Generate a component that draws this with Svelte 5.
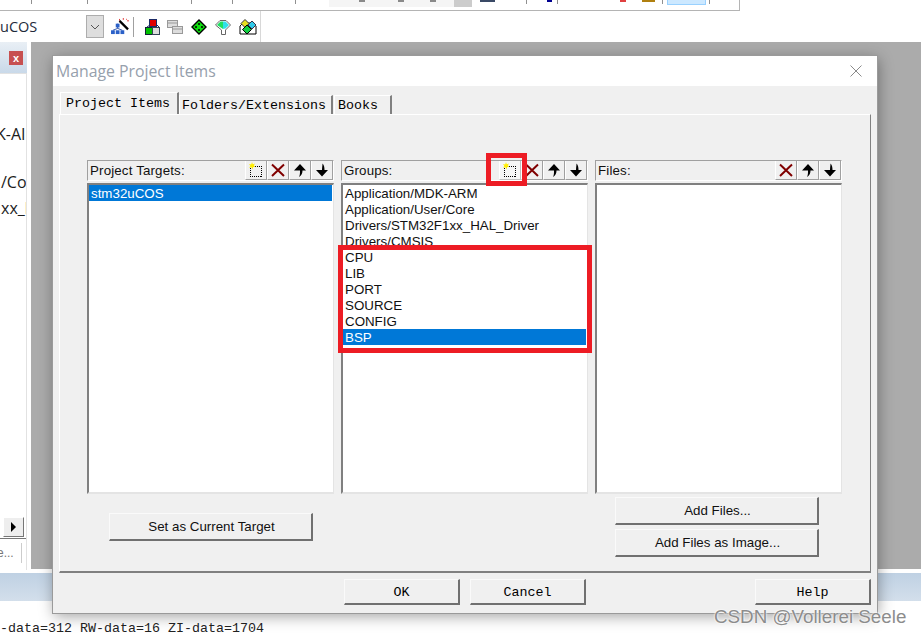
<script>
    const panels = [
        {
            title: 'Project Targets:',
            hasNew: true,
            items: ['stm32uCOS'],
            selected: 0
        },
        {
            title: 'Groups:',
            hasNew: true,
            focusNew: true,
            items: [
                'Application/MDK-ARM',
                'Application/User/Core',
                'Drivers/STM32F1xx_HAL_Driver',
                'Drivers/CMSIS',
                'CPU',
                'LIB',
                'PORT',
                'SOURCE',
                'CONFIG',
                'BSP'
            ],
            selected: 9
        },
        {
            title: 'Files:',
            hasNew: false,
            items: [],
            selected: -1
        }
    ]

    const tabs = ['Project Items', 'Folders/Extensions', 'Books']
    const topTicks = [31, 87, 191, 232, 295, 526, 557, 662, 709]
    // cut-off bits of the toolbar above, only their lower edge is visible
    const topBits = [
        { x: 359, w: 6, h: 2, c: '#8a8a8a' },
        { x: 398, w: 6, h: 2, c: '#8a8a8a' },
        { x: 430, w: 6, h: 2, c: '#8a8a8a' },
        { x: 480, w: 15, h: 2, c: '#3a4a66' },
        { x: 547, w: 5, h: 2, c: '#000090' },
        { x: 620, w: 6, h: 2, c: '#e04040' },
        { x: 642, w: 13, h: 2, c: '#b08010' }
    ]
</script>

{#snippet newIcon()}
    <svg width="16" height="16" viewBox="0 0 16 16">
        <rect x="2.500" y="4.500" width="11" height="10" fill="none" stroke="#000" stroke-dasharray="1 1" shape-rendering="crispEdges" />
        <path d="M4 0l.8 2.200L7 1.500 5.800 3.500 7.500 4.800l-2.300.2L4.500 7.500 3.500 5.300 1 5.800l1.400-1.800L1 2l2.200.5z" fill="#ffee00" />
    </svg>
{/snippet}

{#snippet deleteIcon()}
    <svg width="16" height="16" viewBox="0 0 16 16">
        <path d="M2 2.500L14 14M14 2.500L2 14" stroke="#800000" stroke-width="2" fill="none" />
    </svg>
{/snippet}

{#snippet upIcon()}
    <svg width="16" height="16" viewBox="0 0 16 16">
        <path d="M8 2l6 6.500h-3.500c0 3-1 5-3.500 6.500 1-2 1-4 1-6.500H2z" fill="#000" />
    </svg>
{/snippet}

{#snippet downIcon()}
    <svg width="16" height="16" viewBox="0 0 16 16">
        <path d="M8 14.500l6-6.500h-3.500c0-3-.5-5-2-6.500 0 2-.5 4-.5 6.500H2z" fill="#000" />
    </svg>
{/snippet}

<div class="screen">
    <div class="top-strip">
        <span class="strip-light"></span>
        <span class="strip-grey"></span>
        <span class="strip-sel"></span>
        {#each topTicks as x}
            <span class="tick" style="left: {x}px"></span>
        {/each}
        {#each topBits as bit}
            <span class="tick" style="left: {bit.x}px; width: {bit.w}px; height: {bit.h}px; background: {bit.c}"></span>
        {/each}
    </div>

    <div class="toolbar-row">
        <div class="toolbar">
            <span class="target-name">uCOS</span>
            <span class="combo-arrow">
                <svg width="10" height="6" viewBox="0 0 10 6"><path d="M1 1l4 4 4-4" fill="none" stroke="#555" /></svg>
            </span>
            <svg class="tool wand" width="18" height="17" viewBox="0 0 19 18">
                <path d="M9 1v2M13 0v2M17 3h2M16 1l1 1" stroke="#d33" fill="none" />
                <path d="M9 3l9 9" stroke="#000" stroke-width="2.4" />
                <path d="M7 6v5M2 13l5-2 5 2" stroke="#2a50a8" fill="none" />
                <rect x="5" y="6" width="4" height="4" fill="#2a60c8" />
                <rect x="0" y="13" width="4" height="4" fill="#2a60c8" />
                <rect x="5" y="13" width="4" height="4" fill="#2a60c8" />
                <rect x="10" y="13" width="4" height="4" fill="#2a60c8" />
            </svg>
            <span class="tool-sep"></span>
            <svg class="tool" width="16" height="18" viewBox="0 0 16 18">
                <rect x="4.500" y="1.500" width="7" height="7" fill="#e00000" stroke="#1c2a66" />
                <rect x="0.500" y="9.500" width="7" height="7" fill="#00c000" stroke="#123" />
                <rect x="7.500" y="9.500" width="7" height="7" fill="#ddd" stroke="#345" />
                <path d="M2 9l3-2M14 9l-2-2" stroke="#1c2a66" />
            </svg>
            <svg class="tool windows" width="16" height="18" viewBox="0 0 16 18">
                <rect x="0.500" y="2.500" width="10" height="7" fill="#ddd" stroke="#999" />
                <path d="M1 5h9" stroke="#999" />
                <rect x="5.500" y="8.500" width="10" height="7" fill="#ddd" stroke="#999" />
                <path d="M6 11h9" stroke="#999" />
            </svg>
            <svg class="tool" width="16" height="18" viewBox="0 0 16 18">
                <path d="M8 2l7 7-7 7-7-7z" fill="#10e010" stroke="#000" stroke-width="1.400" />
                <path d="M8 5v2M7 6h2M5 8v2M4 9h2M11 8v2M10 9h2M8 11v2M7 12h2" stroke="#000" />
            </svg>
            <svg class="tool" width="16" height="18" viewBox="0 0 16 18">
                <path d="M.5 7L5 2.500h6L15.500 7l-5 5v4.500h-4V12z" fill="#fff" stroke="#666" />
                <path d="M2 7l3.500-3.500H8v7.500z" fill="#20e060" />
                <path d="M8 3.500h2.500L14 7l-3.500 3.500L8 11z" fill="#30e0e8" />
            </svg>
            <svg class="tool" width="18" height="18" viewBox="0 0 18 18">
                <path d="M1 8l3-3h10l3 3v8H1z" fill="#fff" stroke="#000" />
                <path d="M6 1.500l4 4-4 4-4-4z" fill="#e8e020" stroke="#334" />
                <path d="M13 3l4 4-4 4-4-4z" fill="#30c8e8" stroke="#334" />
                <path d="M8 7l4.500 4.500L8 16l-4.500-4.500z" fill="#10d040" stroke="#000" />
            </svg>
        </div>
    </div>

    <div class="workspace">
        <aside class="side">
            <div class="side-head"><span class="side-close">x</span></div>
            <div class="side-body">
                <div class="side-text">
                    <span class="k">K-AI</span>
                    <span class="co">/Co</span>
                    <span class="xx">xx_l</span>
                </div>
                <div class="scroll-row">
                    <span class="scroll-btn"></span>
                </div>
                <div class="side-foot"><span>e...</span></div>
            </div>
        </aside>
        <div class="grey-area"></div>
    </div>

    <div class="status-band"></div>
    <div class="build-output">-data=312 RW-data=16 ZI-data=1704</div>

    <div class="dialog">
        <div class="title-bar">
            <span class="title">Manage Project Items</span>
            <svg class="close" width="12" height="12" viewBox="0 0 12 12">
                <path d="M0.500 0.500l11 11M11.500 0.500l-11 11" stroke="#8a8a8a" fill="none" />
            </svg>
        </div>
        <div class="dialog-body">
            <div class="tab-strip">
                {#each tabs as tab, i}
                    <div class="tab" class:active={i === 0}>{tab}</div>
                {/each}
            </div>
            <div class="tab-page">
                <div class="columns">
                    {#each panels as panel}
                        <section class="panel">
                            <div class="panel-head">
                                <span class="panel-title">{panel.title}</span>
                                <div class="panel-tools">
                                    {#if panel.hasNew}
                                        <span class="tool-btn" class:focus={panel.focusNew}>{@render newIcon()}</span>
                                    {/if}
                                    <span class="tool-btn">{@render deleteIcon()}</span>
                                    <span class="tool-btn">{@render upIcon()}</span>
                                    <span class="tool-btn">{@render downIcon()}</span>
                                </div>
                            </div>
                            <div class="list">
                                {#each panel.items as item, i}
                                    <div class="list-item" class:selected={i === panel.selected}>{item}</div>
                                {/each}
                            </div>
                        </section>
                    {/each}
                </div>
                <div class="actions">
                    <div class="action-left">
                        <button class="btn wide">Set as Current Target</button>
                    </div>
                    <div class="action-right">
                        <button class="btn wide">Add Files...</button>
                        <button class="btn wide">Add Files as Image...</button>
                    </div>
                </div>
            </div>
            <div class="footer">
                <button class="btn mono">OK</button>
                <button class="btn mono">Cancel</button>
                <button class="btn mono help">Help</button>
            </div>
        </div>

        <!-- red annotations drawn on top of the screenshot -->
        <span class="mark mark-new"></span>
        <span class="mark mark-list"></span>
    </div>

    <div class="watermark">CSDN @Vollerei Seele</div>
</div>

<style>
    :global(body) {
        margin: 0;
        overflow: hidden;
        background: #fff;
    }

    .screen {
        position: relative;
        display: flex;
        flex-direction: column;
        width: 921px;
        height: 633px;
        overflow: hidden;
        background: #fff;
        font-family: "Liberation Sans", Arial, sans-serif;
    }

    .top-strip {
        position: relative;
        flex: none;
        width: 739px;
        height: 10px;
        border-bottom: 1px solid #b4b4b4;
        border-right: 1px solid #b4b4b4;
    }

    .tick {
        position: absolute;
        top: 0;
        width: 1px;
        height: 4px;
        background: #909090;
    }

    .strip-light {
        position: absolute;
        left: 329px;
        top: 0;
        width: 125px;
        height: 7px;
        background: #f5f5f5;
    }

    .strip-grey {
        position: absolute;
        left: 454px;
        top: 0;
        width: 18px;
        height: 7px;
        background: #cccccc;
    }

    .strip-sel {
        position: absolute;
        left: 667px;
        top: 0;
        width: 39px;
        height: 5px;
        box-sizing: border-box;
        background: #cce8ff;
        border: 1px solid #99d1ff;
        border-top: none;
    }

    .toolbar-row {
        flex: none;
        height: 31px;
    }

    .toolbar {
        display: flex;
        align-items: center;
        box-sizing: border-box;
        width: 261px;
        height: 31px;
        border-right: 1px solid #d8d8d8;
    }

    .target-name {
        width: 86px;
        font-family: "Open Sans", sans-serif;
        font-size: 14.5px;
        color: #1e2a3a;
        margin-top: -1px;
    }

    .combo-arrow {
        display: flex;
        align-items: center;
        justify-content: center;
        box-sizing: border-box;
        width: 18px;
        height: 23px;
        background: #dedede;
        border: 1px solid #adadad;
    }

    .tool {
        flex: none;
        margin-left: 8px;
    }

    .wand {
        margin-left: 7px;
    }

    .windows {
        margin-left: 6px;
    }

    .tool-sep {
        width: 1px;
        height: 20px;
        margin-left: 4px;
        margin-right: 3px;
        background: #a0a0a0;
    }

    .workspace {
        display: flex;
        flex: none;
        height: 528px;
    }

    .side {
        display: flex;
        flex-direction: column;
        box-sizing: border-box;
        width: 27px;
        flex: none;
    }

    .side-head {
        flex: none;
        display: flex;
        align-items: center;
        justify-content: flex-end;
        height: 31px;
        padding-right: 4px;
        box-sizing: border-box;
        background: linear-gradient(#e9eff5, #c9d9e9);
    }

    .side-close {
        display: flex;
        align-items: center;
        justify-content: center;
        width: 14px;
        height: 14px;
        background: #c75050;
        color: #fff;
        font-size: 11px;
        font-weight: bold;
        line-height: 14px;
    }

    .side-body {
        flex: 1;
        display: flex;
        flex-direction: column;
        min-height: 0;
        border-top: 1px solid #e2e2e2;
        border-right: 1px solid #e2e2e2;
    }

    .side-text {
        flex: none;
        display: flex;
        flex-direction: column;
        height: 443px;
        overflow: hidden;
        font-family: "Open Sans", sans-serif;
        font-size: 16px;
        color: #1c1c1c;
        line-height: 20px;
        white-space: nowrap;
    }

    .k {
        margin-top: 50px;
        margin-left: -4px;
    }

    .co {
        margin-top: 28px;
        margin-left: 1px;
    }

    .xx {
        margin-top: 6px;
        margin-left: 1px;
    }

    .scroll-row {
        flex: none;
        height: 22px;
        display: flex;
        justify-content: flex-end;
        padding: 0 2px 1px 0;
        border-bottom: 1px solid #777;
        box-sizing: border-box;
    }

    .scroll-btn {
        position: relative;
        box-sizing: border-box;
        width: 21px;
        height: 20px;
        background: #eee;
        border: 1px solid #fff;
        border-right-color: #777;
        border-bottom-color: #777;
    }

    .scroll-btn::after {
        content: '';
        position: absolute;
        left: 7px;
        top: 4px;
        border-left: 5px solid #000;
        border-top: 5px solid transparent;
        border-bottom: 5px solid transparent;
    }

    .side-foot {
        flex: 1;
        display: flex;
        align-items: center;
        font-size: 12px;
        color: #777;
    }

    .side-foot span {
        box-sizing: border-box;
        width: 22px;
        height: 20px;
        line-height: 20px;
        margin-top: -4px;
        border-right: 1px solid #ccc;
        text-indent: -3px;
        overflow: hidden;
    }

    .grey-area {
        flex: 1;
        margin-left: 4px;
        height: 527px;
        background: #ababab;
    }

    .status-band {
        flex: none;
        height: 28px;
        margin-top: 3px;
        background: linear-gradient(#bfd1e3, #d3dfeb);
    }

    .build-output {
        padding-top: 23px;
        font-family: "Liberation Mono", monospace;
        font-size: 13.33px;
        line-height: 10px;
        color: #222;
    }

    .dialog {
        position: absolute;
        left: 53px;
        top: 56px;
        display: flex;
        flex-direction: column;
        box-sizing: border-box;
        width: 824px;
        height: 557px;
        background: #f0f0f0;
        box-shadow: 0 0 0 1px #9a9a9a, 1px 3px 14px rgba(0, 0, 0, 0.38);
    }

    .title-bar {
        flex: none;
        display: flex;
        align-items: center;
        justify-content: space-between;
        height: 30px;
        padding: 0 15px 0 3px;
        background: #fff;
    }

    .title {
        margin-top: -1px;
        font-family: "Open Sans", sans-serif;
        font-size: 15.800px;
        color: #96a0ac;
    }

    .dialog-body {
        flex: 1;
        display: flex;
        flex-direction: column;
        padding: 6px 6px 0;
    }

    .tab-strip {
        flex: none;
        display: flex;
        align-items: flex-end;
        height: 22px;
        padding-left: 1px;
    }

    .tab {
        box-sizing: border-box;
        height: 19px;
        padding: 1px 5px 0 2px;
        margin-right: 1px;
        background: #f0f0f0;
        border-top: 1px solid #fff;
        border-left: 1px solid #fff;
        border-right: 2px solid #808080;
        font-family: "Liberation Mono", monospace;
        font-size: 13.33px;
        line-height: 18px;
        color: #000;
    }

    .tab.active {
        height: 22px;
        padding: 1px 7px 0 5px;
        margin-right: 0;
        line-height: 20px;
    }

    .tab:last-child {
        padding-left: 3px;
        padding-right: 12px;
    }

    .tab-page {
        flex: none;
        box-sizing: border-box;
        height: 459px;
        padding: 45px 28px 0 27px;
        border-top: 1px solid #fff;
        border-left: 1px solid #fff;
        border-right: 1px solid #808080;
        border-bottom: 2px solid #808080;
    }

    .columns {
        display: grid;
        grid-template-columns: repeat(3, 247px);
        column-gap: 7px;
    }

    .panel-head {
        display: flex;
        align-items: center;
        justify-content: space-between;
        box-sizing: border-box;
        height: 21px;
        margin-bottom: 2px;
        padding-left: 2px;
        border-top: 1px solid #a0a0a0;
        border-left: 1px solid #a0a0a0;
        border-right: 1px solid #fff;
        border-bottom: 1px solid #fff;
    }

    .panel-title {
        font-size: 13.33px;
        color: #111;
        letter-spacing: 0.15px;
    }

    .panel-tools {
        display: flex;
        height: 100%;
    }

    .tool-btn {
        display: flex;
        align-items: center;
        justify-content: center;
        box-sizing: border-box;
        width: 22px;
        height: 19px;
        border-left: 1px solid #fff;
        border-right: 1px solid #a0a0a0;
        border-bottom: 1px solid #a0a0a0;
    }

    .tool-btn.focus {
        background: #f6f6f6;
        border-color: #c0c0c0;
        border-left-color: #fff;
    }

    .list {
        box-sizing: border-box;
        height: 311px;
        padding-right: 1px;
        background: #fff;
        border-top: 2px solid #808080;
        border-left: 2px solid #808080;
        border-right: 1px solid #e4e4e4;
        border-bottom: 2px solid #e4e4e4;
        overflow: hidden;
    }

    .list-item {
        box-sizing: border-box;
        height: 16px;
        padding: 1px 0 0 2px;
        font-size: 13.33px;
        line-height: 15px;
        color: #111;
    }

    .list-item.selected {
        background: #0078d7;
        color: #fff;
    }

    .actions {
        display: flex;
        justify-content: space-between;
    }

    .action-left {
        padding: 19px 0 0 22px;
    }

    .action-right {
        display: flex;
        flex-direction: column;
        gap: 4px;
        padding: 3px 23px 0 0;
    }

    .btn {
        box-sizing: border-box;
        padding: 0;
        background: #f0f0f0;
        border: 1px solid #fff;
        border-right: 2px solid #707070;
        border-bottom: 2px solid #707070;
        border-top-color: #fafafa;
        border-left-color: #fafafa;
        border-radius: 0;
        color: #111;
        font-family: "Liberation Sans", Arial, sans-serif;
        font-size: 13.33px;
    }

    .btn.wide {
        width: 204px;
        height: 28px;
        padding-left: 2px;
    }

    .btn.mono {
        width: 116px;
        height: 26px;
        padding-top: 2px;
        font-family: "Liberation Mono", monospace;
        color: #000;
    }

    .footer {
        display: flex;
        gap: 10px;
        padding: 6px 0 0 285px;
    }

    .footer .help {
        margin-left: 159px;
    }

    .mark {
        position: absolute;
        box-sizing: border-box;
        border: 5px solid #ed1c24;
    }

    .mark-new {
        left: 433px;
        top: 97px;
        width: 41px;
        height: 33px;
    }

    .mark-list {
        left: 285px;
        top: 189px;
        width: 254px;
        height: 108px;
    }

    .watermark {
        position: absolute;
        left: 714px;
        top: 606px;
        font-size: 18.800px;
        line-height: 21px;
        color: #8c8c8c;
        text-shadow: 0 0 2px #fff, 0 0 2px #fff;
    }
</style>
